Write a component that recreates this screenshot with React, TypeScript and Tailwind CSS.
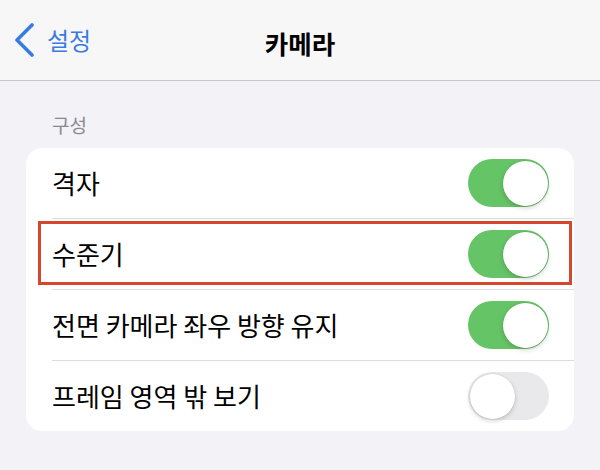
import React from 'react';

const font = { fontFamily: '"Noto Sans CJK KR", "Noto Sans", sans-serif' };

const Toggle: React.FC<{ on: boolean }> = ({ on }) => (
  <div
    className={`relative h-[48px] w-[81px] shrink-0 rounded-full ${
      on ? 'bg-[#65c466]' : 'bg-[#e9e9eb]'
    }`}
  >
    <div
      className={`absolute top-[1.5px] h-[45px] w-[45px] rounded-full bg-white shadow-[0_2px_5px_rgba(0,0,0,0.18),0_0_0_0.5px_rgba(0,0,0,0.06)] ${
        on ? 'right-[1.5px]' : 'left-[1.5px]'
      }`}
    />
  </div>
);

const rows = [
  { label: '격자', on: true },
  { label: '수준기', on: true, highlight: true },
  { label: '전면 카메라 좌우 방향 유지', on: true },
  { label: '프레임 영역 밖 보기', on: false },
];

const App: React.FC = () => {
  return (
    <div className="h-[470px] w-[600px] overflow-hidden bg-[#f2f2f7]" style={font}>
      {/* Nav bar */}
      <div className="relative flex h-[81px] items-center border-b border-[#c8c8cc] bg-[#f7f7f8]">
        <div className="flex items-center pl-[14px] text-[#3a7be0]">
          <svg width="22" height="34" viewBox="0 0 22 34" fill="none">
            <path
              d="M18 2 L3 17 L18 32"
              stroke="currentColor"
              strokeWidth="3.6"
              strokeLinecap="round"
              strokeLinejoin="round"
            />
          </svg>
          <span className="ml-[11px] text-[24px] leading-none">설정</span>
        </div>
        <div className="absolute inset-x-0 top-[28px] text-center text-[25.5px] font-semibold leading-[30px] text-black">
          카메라
        </div>
      </div>

      {/* Section header */}
      <div className="pl-[52px] pt-[34px] text-[19px] leading-[20px] text-[#8a8a8e]">구성</div>

      {/* Card */}
      <div className="mx-[26px] mt-[13px] rounded-[16px] bg-white">
        {rows.map((row, i) => (
          <div key={row.label}>
            {i > 0 && <div className="ml-[26px] h-px bg-[#dcdce0]" />}
            <div className="relative flex h-[70px] items-center justify-between pl-[26px] pr-[25px]">
              <span className="text-[26px] leading-none text-black">{row.label}</span>
              <Toggle on={row.on} />
              {row.highlight && (
                <div className="pointer-events-none absolute bottom-[4px] left-[12px] right-[2px] top-[2px] border-[3px] border-[#d4472d]" />
              )}
            </div>
          </div>
        ))}
      </div>
    </div>
  );
};

export default App;
